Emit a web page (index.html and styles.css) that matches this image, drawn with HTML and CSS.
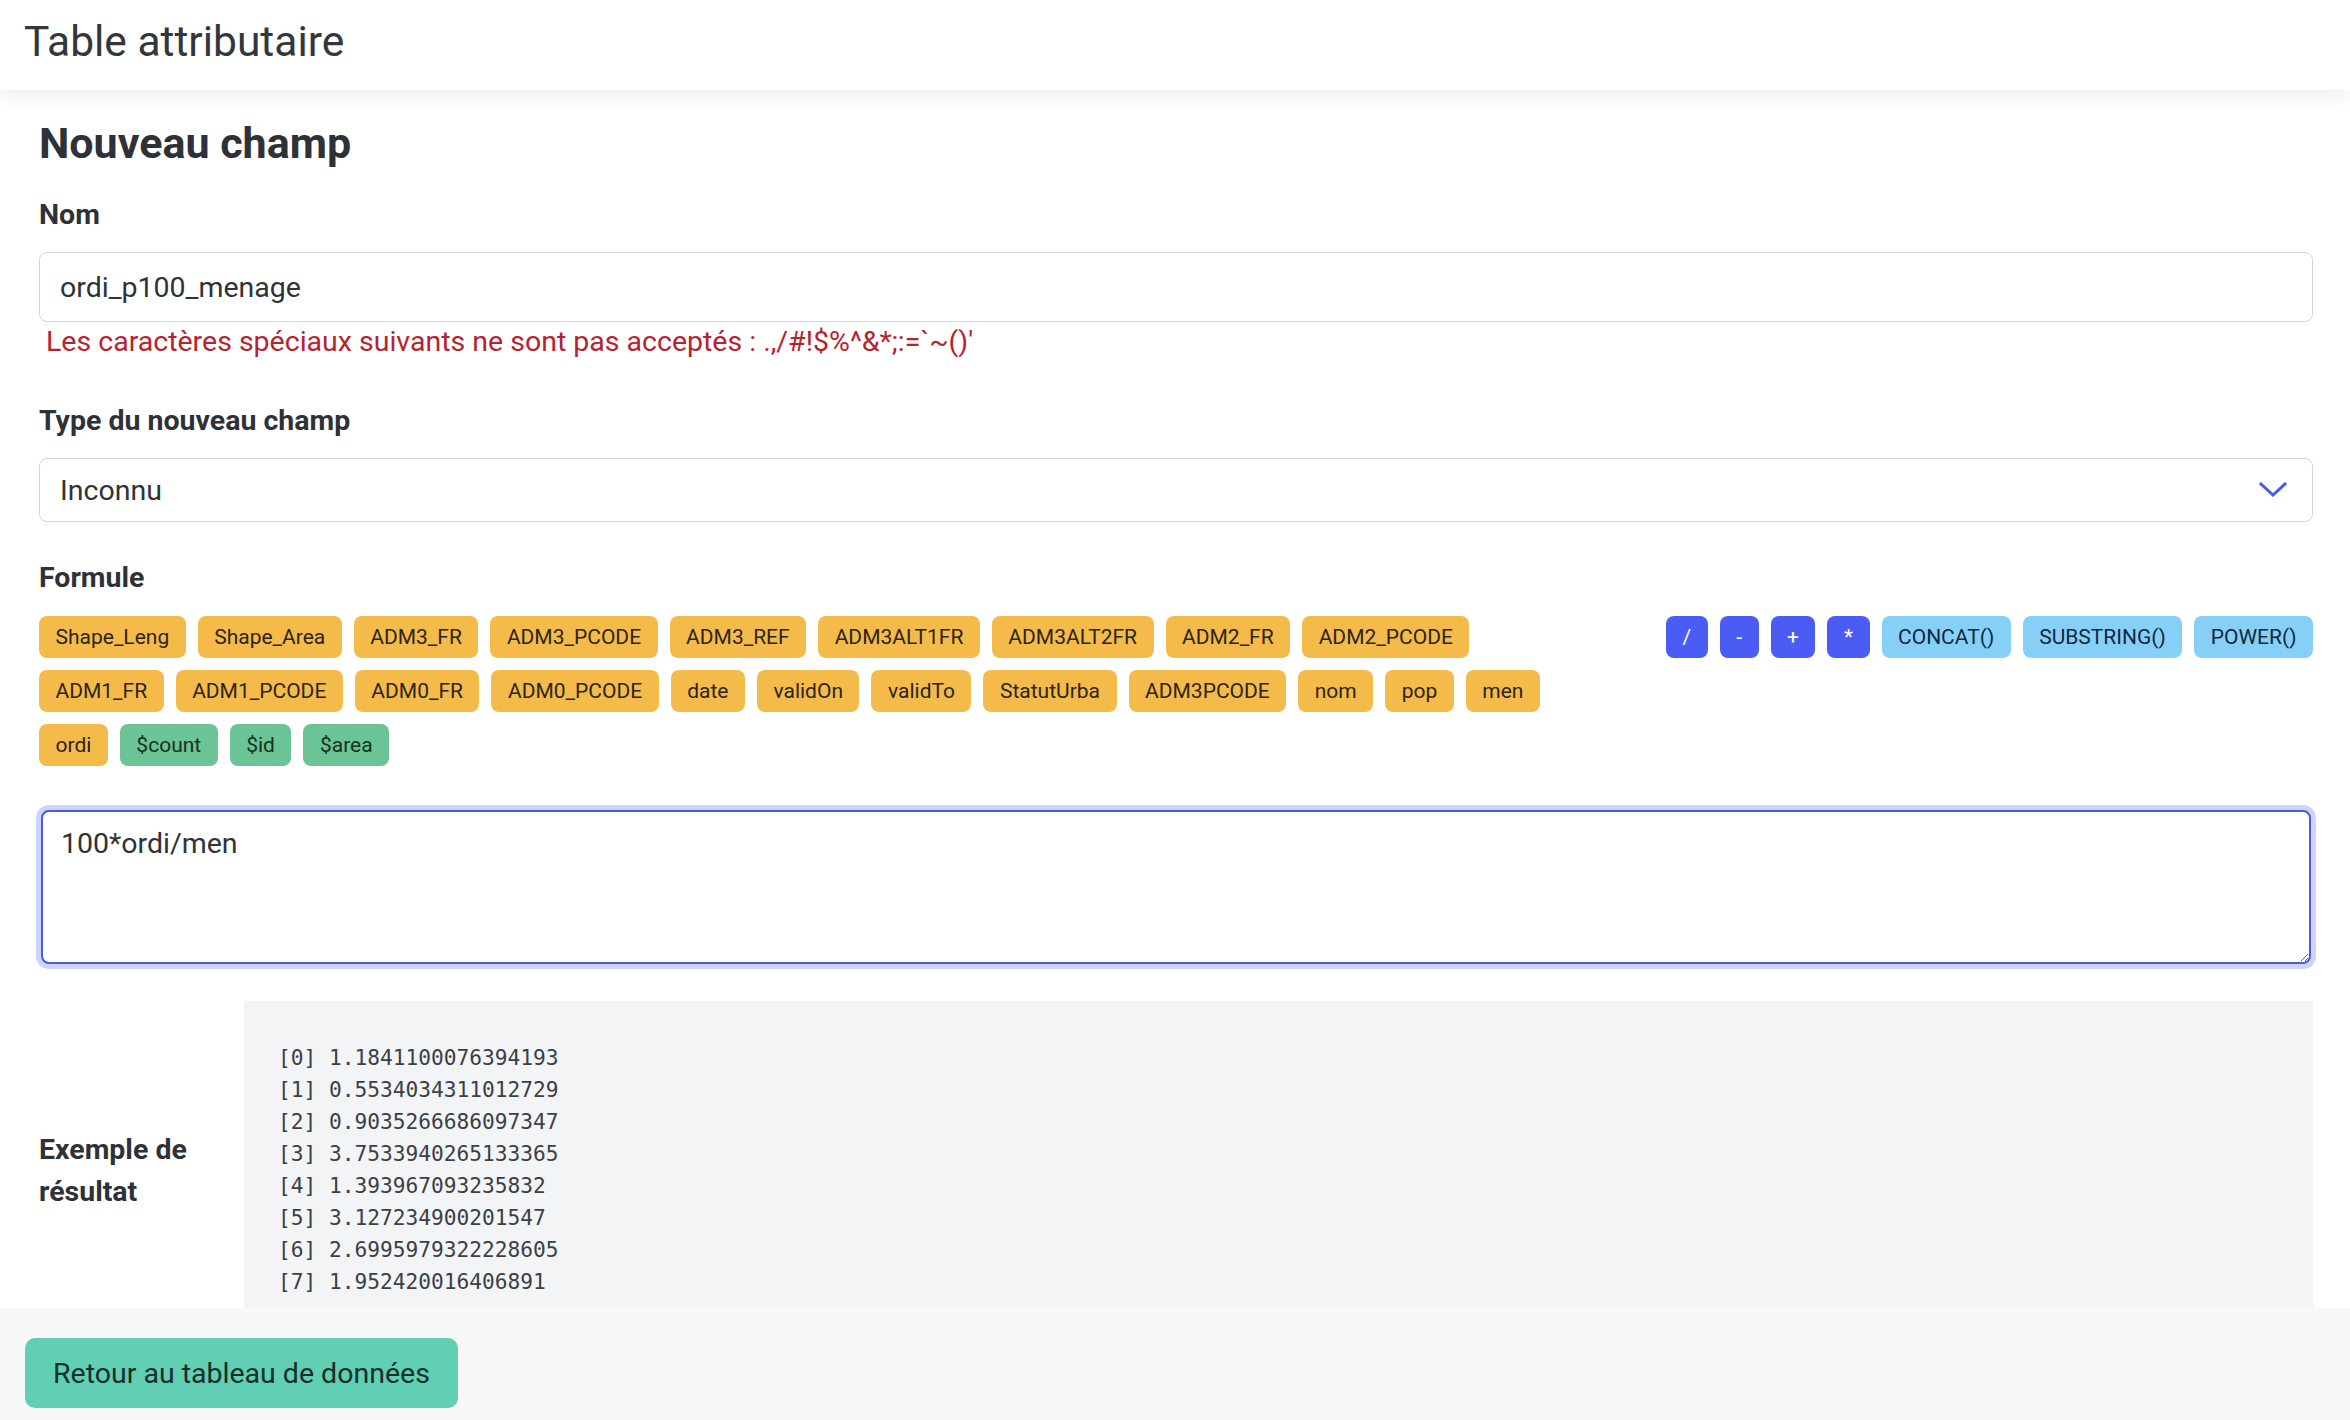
FILE: index.html
```html
<!DOCTYPE html>
<html lang="fr">
<head>
<meta charset="utf-8">
<title>Table attributaire</title>
<link rel="stylesheet" href="styles.css">
</head>
<body>
<header class="topbar">
  <h1 class="topbar-title">Table attributaire</h1>
</header>

<main class="content">
  <h2 class="page-title">Nouveau champ</h2>

  <section class="field field-name">
    <label class="field-label" for="nom">Nom</label>
    <input id="nom" class="text-input" type="text" value="ordi_p100_menage">
    <p class="field-error">Les caractères spéciaux suivants ne sont pas acceptés : .,/#!$%^&amp;*;:=`~()'</p>
  </section>

  <section class="field field-type">
    <div class="field-label">Type du nouveau champ</div>
    <div class="select-box">
      <span class="select-value">Inconnu</span>
      <svg class="select-chevron" width="28" height="16" viewBox="0 0 28 16" aria-hidden="true">
        <polyline points="2,2 14,13 26,2" fill="none" stroke="#4b5ae6" stroke-width="3" stroke-linecap="square"/>
      </svg>
    </div>
  </section>

  <section class="field field-formula">
    <div class="field-label">Formule</div>
    <div class="chip-area">
      <div class="chip-group chip-group-fields">
        <span class="chip chip-field">Shape_Leng</span>
        <span class="chip chip-field">Shape_Area</span>
        <span class="chip chip-field">ADM3_FR</span>
        <span class="chip chip-field">ADM3_PCODE</span>
        <span class="chip chip-field">ADM3_REF</span>
        <span class="chip chip-field">ADM3ALT1FR</span>
        <span class="chip chip-field">ADM3ALT2FR</span>
        <span class="chip chip-field">ADM2_FR</span>
        <span class="chip chip-field">ADM2_PCODE</span>
        <span class="chip chip-field">ADM1_FR</span>
        <span class="chip chip-field">ADM1_PCODE</span>
        <span class="chip chip-field">ADM0_FR</span>
        <span class="chip chip-field">ADM0_PCODE</span>
        <span class="chip chip-field">date</span>
        <span class="chip chip-field">validOn</span>
        <span class="chip chip-field">validTo</span>
        <span class="chip chip-field">StatutUrba</span>
        <span class="chip chip-field">ADM3PCODE</span>
        <span class="chip chip-field">nom</span>
        <span class="chip chip-field">pop</span>
        <span class="chip chip-field">men</span>
        <span class="chip chip-field">ordi</span>
        <span class="chip chip-var">$count</span>
        <span class="chip chip-var">$id</span>
        <span class="chip chip-var">$area</span>
      </div>
      <div class="chip-group chip-group-ops">
        <span class="chip chip-op">/</span>
        <span class="chip chip-op">-</span>
        <span class="chip chip-op">+</span>
        <span class="chip chip-op">*</span>
        <span class="chip chip-fn">CONCAT()</span>
        <span class="chip chip-fn">SUBSTRING()</span>
        <span class="chip chip-fn">POWER()</span>
      </div>
    </div>
    <textarea class="formula-input" spellcheck="false">100*ordi/men</textarea>
  </section>

  <section class="result">
    <div class="result-label">Exemple de résultat</div>
    <pre class="result-output">[0] 1.1841100076394193
[1] 0.5534034311012729
[2] 0.9035266686097347
[3] 3.7533940265133365
[4] 1.393967093235832
[5] 3.127234900201547
[6] 2.6995979322228605
[7] 1.952420016406891</pre>
  </section>
</main>

<footer class="footer">
  <button class="back-button" type="button">Retour au tableau de données</button>
</footer>
</body>
</html>
```

FILE: styles.css
```css
html, body {
  margin: 0;
  padding: 0;
  height: 100%;
  overflow: hidden;
}

body {
  font-family: Roboto, "Liberation Sans", sans-serif;
  color: #2f3237;
  background: #ffffff;
}

.topbar {
  height: 90px;
  box-sizing: border-box;
  display: flex;
  align-items: center;
  padding: 0 24px;
  background: #ffffff;
  box-shadow: 0 6px 18px rgba(0, 0, 0, 0.07);
  position: relative;
  z-index: 2;
}

.topbar-title {
  margin: 0 0 7px 0;
  font-size: 42.5px;
  line-height: 50px;
  font-weight: 400;
  color: #33363b;
}

.content {
  padding: 28px 37px 0 39px;
  display: flex;
  flex-direction: column;
}

.page-title {
  margin: 0;
  font-size: 43px;
  line-height: 50px;
  font-weight: 700;
  color: #2e3138;
}

.field {
  display: flex;
  flex-direction: column;
}

.field-name { margin-top: 27px; }
.field-type { margin-top: 39px; }
.field-formula { margin-top: 36px; }

.field-label {
  font-size: 28.5px;
  line-height: 40px;
  font-weight: 700;
  color: #2e3138;
}

.text-input {
  margin-top: 17px;
  height: 70px;
  box-sizing: border-box;
  border: 1.5px solid #d3d5d9;
  border-radius: 8px;
  padding: 0 20px;
  font-family: inherit;
  font-size: 28.5px;
  color: #2f3237;
  background: #ffffff;
  outline: none;
}

.field-error {
  margin: 0;
  padding-left: 7px;
  font-size: 28.5px;
  line-height: 40px;
  color: #b6232f;
}

.select-box {
  margin-top: 17px;
  height: 64px;
  box-sizing: border-box;
  border: 1.5px solid #d3d5d9;
  border-radius: 8px;
  padding: 0 25px 0 20px;
  display: flex;
  align-items: center;
  justify-content: space-between;
  background: #ffffff;
}

.select-value {
  font-size: 28.5px;
  color: #2f3237;
}

.select-chevron {
  display: block;
}

.chip-area {
  margin-top: 18px;
  display: flex;
  align-items: flex-start;
  justify-content: space-between;
}

.chip-group {
  display: flex;
  flex-wrap: wrap;
  gap: 12px;
}

.chip-group-fields {
  width: 1545px;
}

.chip-group-ops {
  justify-content: flex-end;
}

.chip {
  height: 42px;
  box-sizing: border-box;
  padding: 0 16.5px;
  border-radius: 8px;
  display: inline-flex;
  align-items: center;
  font-size: 21px;
  line-height: 1;
  white-space: nowrap;
}

.chip-field {
  background: #f4bb4b;
  color: #2c2413;
}

.chip-var {
  background: #6bc495;
  color: #163222;
}

.chip-op {
  background: #4b5cf5;
  color: #ffffff;
}

.chip-fn {
  background: #86d0f8;
  color: #10283f;
}

.formula-input {
  margin: 44px 2px 0 2px;
  height: 154px;
  box-sizing: border-box;
  border: 2px solid #4c5bd6;
  border-radius: 8px;
  box-shadow: 0 0 0 5px #ced3fb;
  padding: 11px 18px;
  font-family: inherit;
  font-size: 28.5px;
  line-height: 42px;
  color: #2f3237;
  background: #ffffff;
  outline: none;
  resize: vertical;
}

.result {
  margin-top: 37px;
  display: grid;
  grid-template-columns: 205px 1fr;
  align-items: center;
}

.result-label {
  font-size: 28.5px;
  line-height: 42px;
  font-weight: 700;
  color: #2e3138;
}

.result-output {
  margin: 0;
  padding: 41px 34px 43px 34px;
  background: #f3f4f6;
  font-family: "DejaVu Sans Mono", "Liberation Mono", monospace;
  font-size: 21.2px;
  line-height: 32px;
  color: #3b3f46;
}

.footer {
  position: fixed;
  left: 0;
  right: 0;
  bottom: 0;
  height: 112px;
  box-sizing: border-box;
  padding: 30px 25px 0 25px;
  background: #f8f8f9;
  z-index: 3;
}

.back-button {
  height: 70px;
  padding: 0 28px;
  border: none;
  border-radius: 10px;
  background: #61cfb3;
  color: #13302a;
  font-family: inherit;
  font-size: 28.5px;
  cursor: pointer;
}
```
